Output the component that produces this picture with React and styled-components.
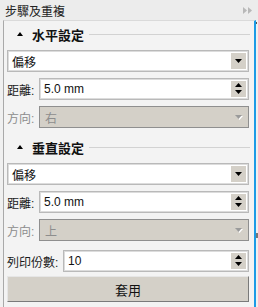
import React from 'react';
import styled, { createGlobalStyle } from 'styled-components';

const GlobalStyle = createGlobalStyle`
  html, body {
    margin: 0;
    padding: 0;
    background: #f0f0f0;
  }
  * { box-sizing: border-box; }
`;

const font = `"Liberation Sans", "Noto Sans CJK TC", sans-serif`;

const Window = styled.div`
  width: 258px;
  height: 307px;
  display: flex;
  flex-direction: column;
  background: #f0f0f0;
  font-family: ${font};
  font-size: 12px;
  color: #1a1a1a;
  overflow: hidden;
`;

const TitleBar = styled.div`
  height: 20px;
  flex: none;
  display: flex;
  align-items: center;
  justify-content: space-between;
  padding: 0 6px 0 5px;
  background: #ececec;
  font-size: 12px;
  color: #222;
`;

const Body = styled.div`
  flex: 1;
  display: flex;
  min-height: 0;
`;

const Panel = styled.div`
  flex: 1;
  margin-left: 3px;
  border-left: 1px solid #a9a9a9;
  border-top: 1px solid #dadada;
  border-right: 2px solid #1c9be6;
  background: #f3f3f3;
  padding: 3px 5px 0 3px;
  display: flex;
  flex-direction: column;
`;

const Gutter = styled.div`
  width: 2px;
  flex: none;
  position: relative;
  &::before {
    content: '';
    position: absolute;
    left: 0;
    top: 2px;
    width: 1px;
    height: 2px;
    background: #555;
  }
  &::after {
    content: '';
    position: absolute;
    left: 0;
    top: 213px;
    width: 2px;
    height: 5px;
    background: #777;
  }
`;

const SectionHead = styled.div`
  height: 20px;
  display: flex;
  align-items: center;
  gap: 8px;
  padding-left: 10px;
  margin-top: ${p => p.$top || 0}px;
  margin-bottom: 6px;
  font-weight: bold;
  font-size: 13px;
  color: #111;
  &::after {
    content: '';
    flex: 1;
    height: 1px;
    background: #d2d2d2;
    margin: 0 -1px 0 -3px;
  }
`;

const Row = styled.div`
  display: flex;
  align-items: center;
  height: 22px;
  margin-top: ${p => p.$top || 0}px;
  margin-bottom: ${p => p.$gap ?? 6}px;
`;

const Label = styled.span`
  width: ${p => p.$w}px;
  flex: none;
  color: ${p => (p.$disabled ? '#8d8d8d' : '#1a1a1a')};
  white-space: nowrap;
`;

const Field = styled.div`
  flex: 1;
  height: 22px;
  display: flex;
  align-items: stretch;
  border: 1px solid ${p => (p.$disabled ? '#8f8f8f' : '#b9b9b9')};
  box-shadow: inset 0 0 0 1px ${p => (p.$disabled ? '#d4d0c8' : '#dcdcdc')};
  background: ${p => (p.$disabled ? '#d4d0c8' : '#fff')};
  padding: 2px;
`;

const Value = styled.span`
  flex: 1;
  display: flex;
  align-items: center;
  padding-left: ${p => p.$pad ?? 2}px;
  color: ${p => (p.$disabled ? '#8d8d8d' : '#111')};
  font-size: 12px;
`;

const SideButton = styled.div`
  width: 15px;
  flex: none;
  background: ${p => (p.$disabled ? 'transparent' : '#d4d0c8')};
  display: flex;
  flex-direction: column;
  align-items: center;
  justify-content: center;
  gap: 2px;
`;

const ApplyButton = styled.button`
  height: 26px;
  width: 100%;
  margin-top: 4px;
  background: #d4d0c8;
  border: 1px solid #a0a0a0;
  border-top-color: #e6e6e6;
  border-left-color: #e6e6e6;
  border-bottom-color: #7a7a7a;
  border-right-color: #7a7a7a;
  font-family: ${font};
  font-size: 13px;
  color: #111;
  padding: 0;
`;

const Tri = ({ dir = 'down', color = '#000', w = 7, h = 4, shadow }) => (
  <svg width={w + 1} height={h + 1} viewBox={`0 0 ${w + 1} ${h + 1}`}>
    {shadow && (
      <polygon points={`1,1 ${w + 1},1 ${w / 2 + 1},${h + 1}`} fill={shadow} />
    )}
    <polygon
      points={dir === 'down' ? `0,0 ${w},0 ${w / 2},${h}` : `0,${h} ${w},${h} ${w / 2},0`}
      fill={color}
    />
  </svg>
);

const Select = ({ value, disabled }) => (
  <Field $disabled={disabled}>
    <Value $disabled={disabled} $pad={disabled ? 3 : 2}>{value}</Value>
    <SideButton $disabled={disabled}>
      {disabled ? <Tri color="#9a9a9a" shadow="#ffffff" /> : <Tri />}
    </SideButton>
  </Field>
);

const Spin = ({ value }) => (
  <Field>
    <Value>{value}</Value>
    <SideButton>
      <Tri dir="up" />
      <Tri />
    </SideButton>
  </Field>
);

const Section = ({ title, top, dir }) => (
  <>
    <SectionHead $top={top}>
      <Tri dir="up" w={6} h={4} />
      {title}
    </SectionHead>
    <Row>
      <Select value="偏移" />
    </Row>
    <Row>
      <Label $w={32}>距離:</Label>
      <Spin value="5.0 mm" />
    </Row>
    <Row $gap={0}>
      <Label $w={32} $disabled>方向:</Label>
      <Select value={dir} disabled />
    </Row>
  </>
);

export default function App() {
  return (
    <>
      <GlobalStyle />
      <Window>
        <TitleBar>
          <span>步驟及重複</span>
          <svg width="9" height="7" viewBox="0 0 9 7">
            <polygon points="0,0 4,3.5 0,7" fill="#b8b8b8" />
            <polygon points="5,0 9,3.5 5,7" fill="#b8b8b8" />
          </svg>
        </TitleBar>
        <Body>
          <Panel>
            <Section title="水平設定" top={0} dir="右" />
            <Section title="垂直設定" top={9} dir="上" />
            <Row $top={9} $gap={0}>
              <Label $w={56}>列印份數:</Label>
              <Spin value="10" />
            </Row>
            <ApplyButton>套用</ApplyButton>
          </Panel>
          <Gutter />
        </Body>
      </Window>
    </>
  );
}
